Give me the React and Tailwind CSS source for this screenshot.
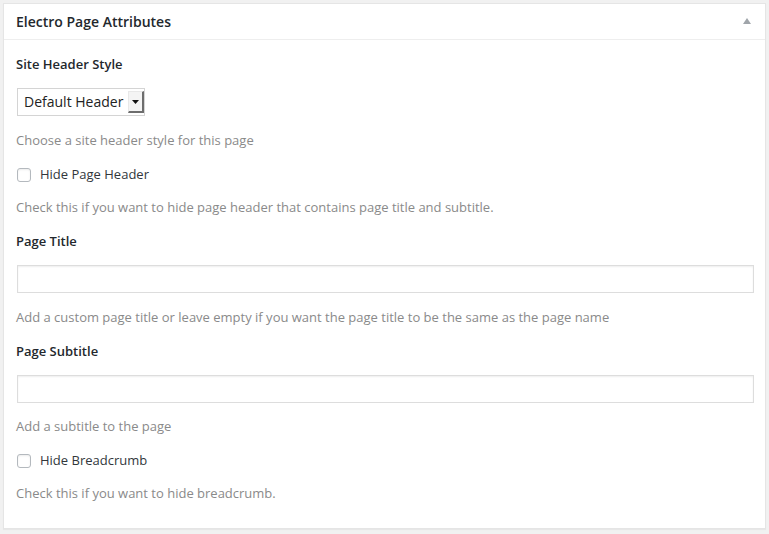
import React from 'react';

const font = { fontFamily: '"Open Sans", "Noto Sans", sans-serif' };

const Label = ({ children, className = '' }) => (
  <div className={`text-[13px] leading-[20px] font-semibold text-[#23282d] ${className}`}>{children}</div>
);

const Desc = ({ children, className = '' }) => (
  <div className={`text-[13px] leading-[20px] text-[#8a8a8a] ${className}`}>{children}</div>
);

const Check = ({ label, className = '' }) => (
  <label className={`flex items-center h-[20px] ${className}`}>
    <span className="ml-px w-[14px] h-[14px] rounded-[3px] border border-[#b4b9be] bg-white shadow-[inset_0_1px_2px_rgba(0,0,0,0.08)]" />
    <span className="ml-[9px] text-[13px] text-[#32373c]">{label}</span>
  </label>
);

const TextInput = ({ className = '' }) => (
  <div className={`ml-px -mr-px h-[28px] border border-[#dddddd] bg-white shadow-[inset_0_1px_2px_rgba(0,0,0,0.07)] ${className}`} />
);

export default function App() {
  return (
    <div className="min-h-screen bg-[#f1f1f1] pt-[3px] pl-[3px]" style={font}>
      <div className="w-[763px] border border-[#e5e5e5] bg-white shadow-[0_1px_1px_rgba(0,0,0,0.04)]">
        <div className="h-[36px] flex items-center justify-between border-b border-[#eeeeee] pl-[12px] pr-[14px]">
          <h2 className="text-[14px] font-semibold text-[#23282d]">Electro Page Attributes</h2>
          <svg width="8" height="6" viewBox="0 0 8 6" className="mt-[-1px]">
            <path d="M4 0 L8 6 L0 6 Z" fill="#a0a5aa" />
          </svg>
        </div>
        <div className="flex flex-col px-[12px] pt-[14px] pb-[25px]">
          <Label>Site Header Style</Label>
          <div className="mt-[14px] ml-px flex h-[28px] w-[128px] border border-[#d4d4d4] bg-white">
            <span className="flex-1 pl-[6px] text-[14px] leading-[26px] text-[#222]">Default Header</span>
            <span className="my-[2px] w-[16px] flex items-center justify-center bg-[#f4f4f4] border-r-2 border-b-2 border-[#6d6d6d] border-l border-t border-l-[#e8e8e8] border-t-[#e8e8e8]">
              <svg width="7" height="4" viewBox="0 0 7 4">
                <path d="M0 0 L7 0 L3.5 4 Z" fill="#111" />
              </svg>
            </span>
          </div>
          <Desc className="mt-[14px]">Choose a site header style for this page</Desc>
          <Check className="mt-[15px]" label="Hide Page Header" />
          <Desc className="mt-[12px]">Check this if you want to hide page header that contains page title and subtitle.</Desc>
          <Label className="mt-[14px]">Page Title</Label>
          <TextInput className="mt-[14px]" />
          <Desc className="mt-[14px]">Add a custom page title or leave empty if you want the page title to be the same as the page name</Desc>
          <Label className="mt-[14px]">Page Subtitle</Label>
          <TextInput className="mt-[14px]" />
          <Desc className="mt-[13px]">Add a subtitle to the page</Desc>
          <Check className="mt-[15px]" label="Hide Breadcrumb" />
          <Desc className="mt-[12px]">Check this if you want to hide breadcrumb.</Desc>
        </div>
      </div>
    </div>
  );
}
